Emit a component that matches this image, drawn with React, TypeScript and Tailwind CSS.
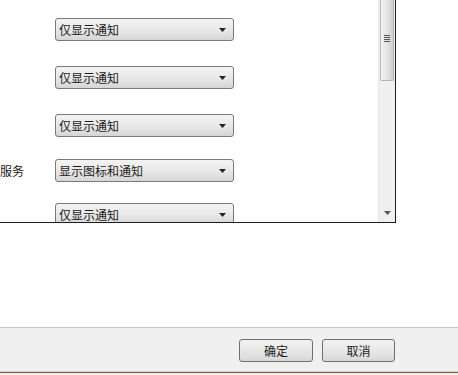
import React from "react";

const font = { fontFamily: '"Noto Sans CJK SC", "Microsoft YaHei", sans-serif' };

function Arrow({ color = "#222" }: { color?: string }) {
  return (
    <svg width="7" height="4" viewBox="0 0 7 4">
      <path d="M0 0h7L3.5 4z" fill={color} />
    </svg>
  );
}

function Select({ label, mt }: { label: string; mt: string }) {
  return (
    <div
      className={`${mt} ml-[55px] w-[179px] h-[23px] shrink-0 rounded-[3px] border border-[#7a7a7a] bg-gradient-to-b from-[#f4f4f4] via-[#e9e9e9] to-[#d6d6d6] flex items-center pl-[3px] pr-[7px]`}
    >
      <span className="text-[12px] leading-none text-[#1a1a1a] flex-1">{label}</span>
      <Arrow />
    </div>
  );
}

export default function App() {
  return (
    <div className="w-[458px] h-[375px] bg-white flex flex-col overflow-hidden" style={font}>
      <div className="h-[327px] shrink-0">
        <div className="w-[396px] h-[223px] border-r border-b border-[#1e1e1e] flex">
          <div className="flex-1 flex flex-col overflow-hidden">
            <Select label="仅显示通知" mt="mt-[18px]" />
            <Select label="仅显示通知" mt="mt-[25px]" />
            <Select label="仅显示通知" mt="mt-[25px]" />
            <div className="mt-[22px] flex items-center h-[23px] shrink-0">
              <span className="w-[58px] shrink-0 text-[12px] leading-none text-[#1a1a1a]">服务</span>
              <div className="w-[179px] h-[23px] rounded-[3px] border border-[#7a7a7a] bg-gradient-to-b from-[#f4f4f4] via-[#e9e9e9] to-[#d6d6d6] flex items-center pl-[3px] pr-[7px] -ml-[3px]">
                <span className="text-[12px] leading-none text-[#1a1a1a] flex-1">显示图标和通知</span>
                <Arrow />
              </div>
            </div>
            <Select label="仅显示通知" mt="mt-[21px]" />
          </div>
          <div className="w-[17px] h-full bg-[#f0f0f0] flex flex-col border-l border-[#e8e8e8]">
            <div className="h-[81px] mx-[1px] rounded-b-[2px] border border-t-0 border-[#b4b4b4] bg-gradient-to-r from-[#f4f4f4] via-[#e4e4e4] to-[#cfcfcf] flex items-center justify-center">
              <div className="flex flex-col gap-[1px] mt-[-4px]">
                <div className="w-[6px] h-[1px] bg-[#555]" />
                <div className="w-[6px] h-[1px] bg-[#555]" />
                <div className="w-[6px] h-[1px] bg-[#555]" />
                <div className="w-[6px] h-[1px] bg-[#555]" />
              </div>
            </div>
            <div className="flex-1" />
            <div className="h-[17px] flex items-center justify-center pb-[2px]">
              <Arrow color="#555" />
            </div>
          </div>
        </div>
      </div>
      <div className="flex-1 border-t border-[#c6c6c6] bg-[#f0f0f0] flex flex-col">
        <div className="flex-1 flex items-start pt-[11px]">
          <div className="ml-[239px] w-[74px] h-[23px] rounded-[3px] border border-[#707070] bg-gradient-to-b from-[#f2f2f2] via-[#e8e8e8] to-[#d8d8d8] flex items-center justify-center text-[12px] text-[#1a1a1a]">
            确定
          </div>
          <div className="ml-[9px] w-[73px] h-[23px] rounded-[3px] border border-[#707070] bg-gradient-to-b from-[#f2f2f2] via-[#e8e8e8] to-[#d8d8d8] flex items-center justify-center text-[12px] text-[#1a1a1a]">
            取消
          </div>
        </div>
        <div className="h-[1px] bg-[#e0d0c0]" />
        <div className="h-[1px] bg-[#7a5a40]" />
        <div className="h-[2px] bg-[#f2ede8]" />
      </div>
    </div>
  );
}
